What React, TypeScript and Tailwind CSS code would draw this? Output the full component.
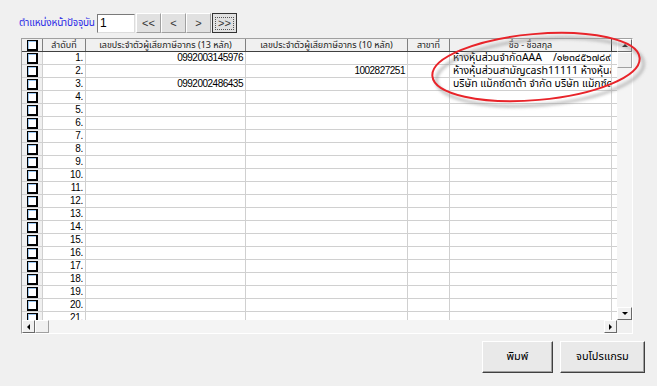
import React from "react";

const FONT = { fontFamily: "Tahoma, 'Noto Sans Thai', 'DejaVu Sans', 'Liberation Sans', sans-serif" };
const NUM = { fontFamily: "'Liberation Sans', sans-serif" };

const rows = Array.from({ length: 21 }, (_, i) => i + 1);
const data: Record<number, { tax13?: string; tax10?: string; name?: string }> = {
  1: { tax13: "0992003145976", name: "ห้างหุ้นส่วนจำกัดAAA    /๑๒๓๔๕๖๗๘๙" },
  2: { tax10: "1002827251", name: "ห้างหุ้นส่วนสามัญcash11111 ห้างหุ้นส่วนสามัญ" },
  3: { tax13: "0992002486435", name: "บริษัท แม็กซ์ดาต้า จำกัด บริษัท แม็กซ์ดาต้า" },
};

function Check() {
  return (
    <div className="w-[11px] h-[11px] border border-black border-r-2 border-b-2 bg-white shadow-[inset_1px_1px_0_#9cc7f0]" />
  );
}

function NavBtn({ label, focused }: { label: string; focused?: boolean }) {
  return (
    <button
      className={
        "w-[25px] h-[20px] flex items-center justify-center text-[11px] text-[#333] bg-[#e1e1e1] border " +
        (focused ? "border-[#333] ml-[1px]" : "border-t-white border-l-white border-r-[#a0a0a0] border-b-[#a0a0a0]")
      }
      style={NUM}
    >
      <span className={focused ? "border border-dotted border-[#555] px-[2px] leading-[11px]" : ""}>{label}</span>
    </button>
  );
}

const colCls = "grid grid-cols-[21px_43px_160px_162px_42px_162px_5px]";

export default function App() {
  return (
    <div className="relative w-[657px] h-[386px] bg-[#f0f0f0] overflow-hidden text-black" style={FONT}>
      {/* top pager */}
      <div className="flex items-center pt-[13px] pl-[19px] h-[33px]">
        <span className="text-[10px] text-[#2a2ae6] w-[78px] whitespace-nowrap tracking-[-0.2px]">ตำแหน่งหน้าปัจจุบัน</span>
        <div className="w-[38px] h-[19px] bg-white border border-t-[#7a7a7a] border-l-[#7a7a7a] border-r-[#dcdcdc] border-b-[#dcdcdc] text-[12px] leading-[16px] pl-[2px] mr-[1px]" style={NUM}>
          1
        </div>
        <NavBtn label="<<" />
        <NavBtn label="<" />
        <NavBtn label=">" />
        <NavBtn label=">>" focused />
      </div>

      {/* grid */}
      <div className="ml-[21px] mt-[5px] w-[612px] h-[296px] flex border border-t-[#a0a0a0] border-l-[#a0a0a0] border-r-white border-b-white bg-[#f0f0f0]">
        <div className="w-[595px] flex flex-col overflow-hidden">
          {/* header */}
          <div className={colCls + " h-[13px] bg-[#f0f0f0] border-b border-[#404040] text-[9px] leading-[12px] text-[#222] whitespace-nowrap"}>
            <div className="flex items-center justify-center border-r border-[#808080]">
              <Check />
            </div>
            <div className="text-center border-r border-[#808080]">ลำดับที่</div>
            <div className="text-center border-r border-[#808080]">เลขประจำตัวผู้เสียภาษีอากร (13 หลัก)</div>
            <div className="text-center border-r border-[#808080]">เลขประจำตัวผู้เสียภาษีอากร (10 หลัก)</div>
            <div className="text-center border-r border-[#808080]">สาขาที่</div>
            <div className="text-center border-r border-[#404040]">ชื่อ - ชื่อสกุล</div>
            <div />
          </div>
          {/* body */}
          <div className="flex-1 overflow-hidden bg-white">
            {rows.map((n) => {
              const d = data[n] || {};
              return (
                <div key={n} className={colCls + " h-[13px] border-b border-[#d0d0d0] leading-[12px] whitespace-nowrap"}>
                  <div className="flex items-center justify-center bg-[#f0f0f0] border-r border-[#d0d0d0]">
                    <Check />
                  </div>
                  <div className="text-right pr-[2px] text-[10px] tracking-[-0.3px] border-r border-[#d0d0d0]" style={NUM}>{n}.</div>
                  <div className="text-right pr-[2px] text-[10px] tracking-[-0.5px] border-r border-[#d0d0d0]" style={NUM}>{d.tax13}</div>
                  <div className="text-right pr-[2px] text-[10px] tracking-[-0.5px] border-r border-[#d0d0d0]" style={NUM}>{d.tax10}</div>
                  <div className="border-r border-[#d0d0d0]" />
                  <div className="pl-[3px] overflow-hidden whitespace-pre text-[10.5px] border-r border-[#d0d0d0]">{d.name}</div>
                  <div />
                </div>
              );
            })}
          </div>
          {/* horizontal scrollbar */}
          <div className="h-[13px] flex bg-[#f0f0f0]">
            <div className="w-[13px] h-[13px] flex items-center justify-center bg-[#f0f0f0] border border-t-white border-l-white border-r-[#696969] border-b-[#696969]">
              <div className="w-0 h-0 border-y-[3px] border-y-transparent border-r-[3px] border-r-black" />
            </div>
            <div className="w-[14px] h-[13px] bg-[#f0f0f0] border border-t-white border-l-white border-r-[#a0a0a0] border-b-[#a0a0a0]" />
            <div className="flex-1 bg-[#f4f4f4]" />
            <div className="w-[13px] h-[13px] flex items-center justify-center bg-[#f0f0f0] border border-t-white border-l-white border-r-[#696969] border-b-[#696969]">
              <div className="w-0 h-0 border-y-[3px] border-y-transparent border-l-[3px] border-l-black" />
            </div>
          </div>
        </div>
        {/* vertical scrollbar */}
        <div className="w-[15px] flex flex-col bg-[#f4f4f4]">
          <div className="h-[13px] flex items-center justify-center bg-[#f0f0f0] border border-t-white border-l-white border-r-[#696969] border-b-[#696969]">
            <div className="w-0 h-0 border-x-[3px] border-x-transparent border-b-[3px] border-b-black" />
          </div>
          <div className="h-[16px] bg-[#f0f0f0] border border-t-white border-l-white border-r-[#a0a0a0] border-b-[#a0a0a0]" />
          <div className="flex-1" />
          <div className="h-[13px] flex items-center justify-center bg-[#f0f0f0] border border-t-white border-l-white border-r-[#696969] border-b-[#696969]">
            <div className="w-0 h-0 border-x-[3px] border-x-transparent border-t-[3px] border-t-black" />
          </div>
          <div className="h-[13px] bg-[#f0f0f0]" />
        </div>
      </div>

      {/* bottom buttons */}
      <div className="flex justify-end gap-[7px] pr-[12px] mt-[7px]">
        <button className="w-[71px] h-[32px] text-[11px] bg-[#e9e9e9] border border-t-white border-l-white border-r-[#404040] border-b-[#404040] shadow-[inset_-1px_-1px_0_#a0a0a0]">
          พิมพ์
        </button>
        <button className="w-[85px] h-[32px] text-[11px] bg-[#e9e9e9] border border-t-white border-l-white border-r-[#404040] border-b-[#404040] shadow-[inset_-1px_-1px_0_#a0a0a0]">
          จบโปรแกรม
        </button>
      </div>

      {/* red annotation ellipse */}
      <svg className="absolute left-0 top-0 pointer-events-none" width="657" height="386">
        <defs>
          <filter id="blur" x="-20%" y="-20%" width="140%" height="140%">
            <feGaussianBlur stdDeviation="1.5" />
          </filter>
        </defs>
        <ellipse cx="540" cy="72" rx="104" ry="33" fill="none" stroke="#9a9a9a" strokeWidth="3" opacity="0.6" filter="url(#blur)" transform="rotate(-5 540 72)" />
        <ellipse cx="536" cy="67" rx="104" ry="33" fill="none" stroke="#e8242a" strokeWidth="2" transform="rotate(-5 536 67)" />
      </svg>
    </div>
  );
}
